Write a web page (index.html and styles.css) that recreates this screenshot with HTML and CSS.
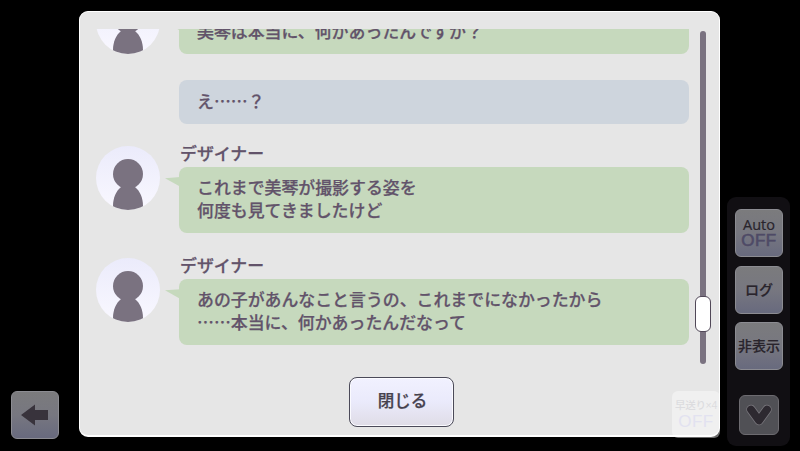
FILE: index.html
```html
<!DOCTYPE html>
<html lang="ja">
<head>
<meta charset="utf-8">
<title>ログ</title>
<link rel="stylesheet" href="styles.css">
</head>
<body>
<svg class="defs" width="0" height="0">
  <defs>
    <linearGradient id="disc" x1="0" y1="0" x2="0" y2="1">
      <stop offset="0" stop-color="#ebebfb"/>
      <stop offset="1" stop-color="#f9f8ff"/>
    </linearGradient>
    <clipPath id="round"><circle cx="32" cy="32" r="32"/></clipPath>
    <symbol id="avatar" viewBox="0 0 64 64">
      <g clip-path="url(#round)">
        <rect width="64" height="64" fill="url(#disc)"/>
        <circle cx="32" cy="28" r="15" fill="#7a7280"/>
        <path d="M25 41H39C44 45 47 52 47 60V64H17V60C17 52 20 45 25 41Z" fill="#7a7280"/>
      </g>
    </symbol>
  </defs>
</svg>
<div class="stage">
  <div class="left">
    <button class="key" aria-label="戻る">
      <svg width="48" height="48" viewBox="0 0 48 48"><path d="M10 24L24 13.5V19H37V29H24V34.5Z" fill="#38333c"/></svg>
    </button>
  </div>
  <main class="dialog">
    <div class="view">
      <div class="log">
        <section class="message first">
          <svg class="avatar"><use href="#avatar"/></svg>
          <div class="body">
            <p class="bubble tail">美琴は本当に、何かあったんですか？</p>
          </div>
        </section>
        <section class="message own">
          <p class="bubble">え……？</p>
        </section>
        <section class="message">
          <svg class="avatar"><use href="#avatar"/></svg>
          <div class="body">
            <h2 class="name">デザイナー</h2>
            <p class="bubble tail">これまで美琴が撮影する姿を<br>何度も見てきましたけど</p>
          </div>
        </section>
        <section class="message">
          <svg class="avatar"><use href="#avatar"/></svg>
          <div class="body">
            <h2 class="name">デザイナー</h2>
            <p class="bubble tail">あの子があんなこと言うの、これまでになかったから<br>……本当に、何かあったんだなって</p>
          </div>
        </section>
      </div>
      <div class="track"><div class="thumb"></div></div>
    </div>
    <button class="close">閉じる</button>
  </main>
  <aside class="side">
    <button class="key auto"><span>Auto</span><b>OFF</b></button>
    <button class="key">ログ</button>
    <button class="key">非表示</button>
    <button class="key fold" aria-label="閉じる">
      <svg width="40" height="40" viewBox="0 0 40 40"><path d="M12 14.5L20 25.5L28 14.5" fill="none" stroke="#77757b" stroke-width="9.4" stroke-linecap="round" stroke-linejoin="round"/><path d="M12 14.5L20 25.5L28 14.5" fill="none" stroke="#2d2930" stroke-width="7.8" stroke-linecap="round" stroke-linejoin="round"/></svg>
    </button>
  </aside>
  <div class="ghost"><span>早送り×4</span><b>OFF</b></div>
</div>
</body>
</html>
```
FILE: styles.css
```css
* { box-sizing: border-box; }

body {
  margin: 0;
  background: #000;
  font-family: "Noto Sans CJK JP", sans-serif;
  font-weight: 500;
  color: #62536a;
}

h2, p { margin: 0; }

button {
  font: inherit;
  padding: 0;
  border: 0;
}

.defs { position: absolute; }

.stage {
  position: relative;
  width: 800px;
  height: 451px;
  overflow: hidden;
  display: grid;
  grid-template-columns: 79px 641px 63px;
  background: #000;
}

.left {
  display: flex;
  align-items: flex-end;
  padding: 0 0 12px 11px;
}

.key {
  width: 48px;
  height: 48px;
  flex: none;
  display: flex;
  flex-direction: column;
  align-items: center;
  justify-content: center;
  border: 1px solid #8c8c92;
  border-radius: 6px;
  background: linear-gradient(#7b7b7d, #777780 50%, #686a7e);
  color: #29242c;
  font-size: 14px;
  line-height: 16px;
  padding-bottom: 2px;
  -webkit-text-stroke: 0.2px #29242c;
  white-space: nowrap;
}

.key svg { flex: none; }

.left .key, .key.fold { padding: 0; }

.dialog {
  height: 426px;
  margin-top: 11px;
  padding: 17px 9px 0 16px;
  border: 1px solid #fff;
  border-bottom-width: 2px;
  border-radius: 9px;
  background: #e6e6e6;
}

.view {
  height: 336px;
  display: flex;
  justify-content: space-between;
}

.log {
  width: 593px;
  overflow: hidden;
}

.message {
  display: flex;
  gap: 19px;
  margin-bottom: 24px;
}

.message.first { margin: -40.5px 0 26px; }

.first .body { padding-top: 22px; }

.message.own {
  margin-bottom: 21px;
  padding-left: 83px;
}

.avatar {
  flex: none;
  width: 64px;
  height: 64px;
  margin-top: 1.5px;
}

.body, .own .bubble { flex: 1; }

.name {
  height: 22px;
  padding-left: 1px;
  font-size: 16.9px;
  font-weight: 500;
  line-height: 15px;
  -webkit-text-stroke: 0.25px #62536a;
}

.bubble {
  position: relative;
  min-height: 43.5px;
  padding: 9.7px 18px 11.1px;
  border-radius: 8px;
  background: #c6d9bd;
  font-size: 16.9px;
  line-height: 22.7px;
  -webkit-text-stroke: 0.25px #62536a;
  white-space: nowrap;
}

.own .bubble {
  padding-top: 10.4px;
  padding-bottom: 10.4px;
  background: #ced5dd;
}

.tail::before {
  content: "";
  position: absolute;
  left: -14px;
  top: 10.5px;
  width: 15px;
  height: 9.5px;
  background: #c6d9bd;
  clip-path: polygon(0 12%, 100% 0, 100% 100%);
}

.track {
  width: 6px;
  height: 333px;
  margin: 2px 4px 0 0;
  padding-top: 265px;
  border-radius: 3px;
  background: #7a7280;
}

.thumb {
  width: 16px;
  height: 36px;
  margin-left: -5px;
  border: 1.5px solid #514858;
  border-radius: 6px;
  background: #fff;
}

.close {
  display: block;
  width: 105px;
  height: 50px;
  margin: 11.5px 0 0 253px;
  border: 1.5px solid #4b4a59;
  border-radius: 8px;
  background: linear-gradient(#f1f1ff, #eaeafb 50%, #dfdce6);
  box-shadow: inset 0 0 0 1px #fbfbff;
  color: #46414e;
  font-size: 16.5px;
  line-height: 44px;
  padding: 0 0 4px 2px;
  -webkit-text-stroke: 0.25px #46414e;
}

.side {
  height: 249px;
  margin: 197px 0 0 7px;
  width: 63px;
  padding: 12px 0 0 8px;
  display: flex;
  flex-direction: column;
  gap: 8.5px;
  border-radius: 9px;
  background: #110f13;
}

.auto {
  font-family: "Open Sans", sans-serif;
  font-size: 14.5px;
  line-height: 14px;
  padding-bottom: 0;
}

.auto b {
  font-family: "Liberation Sans", sans-serif;
  font-size: 17px;
  font-weight: 400;
  line-height: 17px;
  letter-spacing: 0.5px;
  color: #4e4a66;
  -webkit-text-stroke: 0.6px #4e4a66;
}

.fold {
  width: 40px;
  height: 40px;
  margin: 16px 0 0 4px;
  border-color: #6d6b70;
  background: #505055;
}

.ghost {
  position: absolute;
  left: 672px;
  top: 391px;
  width: 48px;
  height: 47px;
  padding-top: 6px;
  border-radius: 6px;
  background: rgba(255, 255, 255, 0.42);
  color: #dcdcdf;
  font-size: 10.5px;
  line-height: 17px;
  white-space: nowrap;
}

.ghost span, .ghost b { display: block; }

.ghost span {
  padding-left: 3px;
  font-family: "Liberation Sans", "Noto Sans CJK JP", sans-serif;
  letter-spacing: -0.3px;
}

.ghost b {
  font-family: "Liberation Sans", sans-serif;
  font-weight: 400;
  font-size: 17px;
  line-height: 15px;
  letter-spacing: 0.5px;
  color: #e2e2f0;
  text-align: center;
}
```
